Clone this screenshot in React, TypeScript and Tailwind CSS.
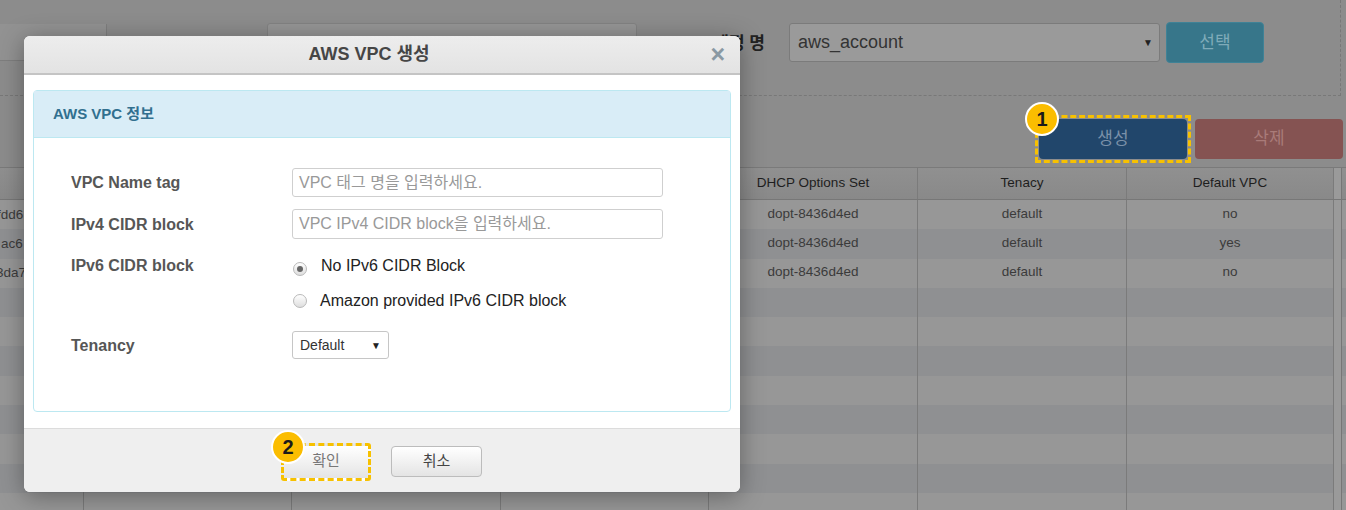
const rows = [
  { id: 'fdd6', shift: '-ml-[3px]', dhcp: 'dopt-8436d4ed', tenancy: 'default', def: 'no' },
  { id: 'ac6', shift: 'ml-[1px]', dhcp: 'dopt-8436d4ed', tenancy: 'default', def: 'yes' },
  { id: '3da7', shift: '-ml-[4px]', dhcp: 'dopt-8436d4ed', tenancy: 'default', def: 'no' },
  ...Array.from({ length: 8 }, () => ({ id: '', shift: '', dhcp: '', tenancy: '', def: '' })),
];

const cols = ['w-[84px]', 'w-[208px]', 'w-[209px]', 'w-[208px]', 'w-[209px]', 'w-[209px]', 'w-[207px]'];

function Badge({ n }: { n: string }) {
  return (
    <span className="absolute -left-[13px] -top-[16px] z-10 flex h-[34px] w-[34px] items-center justify-center rounded-full border-2 border-white bg-[#fbbd00] text-[20px] font-bold leading-none text-[#1a1a1a]">
      {n}
    </span>
  );
}

function Radio({ checked }: { checked?: boolean }) {
  return (
    <span className="flex h-[14px] w-[14px] shrink-0 items-center justify-center rounded-full border border-[#b9b9b9] bg-gradient-to-b from-white to-[#dedede]">
      {checked && <span className="h-[6px] w-[6px] rounded-full bg-[#666]" />}
    </span>
  );
}

export default function App() {
  return (
    <div className="relative h-[510px] w-[1346px] overflow-hidden bg-[#8c8c8c] font-['Liberation_Sans','Noto_Sans_CJK_KR',sans-serif]">
      {/* page behind the dialog */}
      <div className="flex h-[96px] w-[1341px] items-start border-b border-r border-dashed border-[#787878] pt-[23px]">
        <div className="mt-[1px] h-[37px] w-[107px] border-b border-r border-[#7e7e7e] bg-[#929292]" />
        <div className="ml-[160px] h-[38px] w-[370px] rounded-[3px] border border-[#828282] bg-[#959595]" />
        <div className="ml-[74px] mt-[8px] w-[54px] text-right text-[17px] font-bold text-[#222]">계정 명</div>
        <div className="ml-[24px] flex h-[39px] w-[371px] items-center justify-between rounded-[3px] border border-[#7b7b7b] bg-[#9a9a9a] pl-[8px] pr-[6px]">
          <span className="text-[18px] text-[#333]">aws_account</span>
          <span className="text-[10px] text-[#222]">▼</span>
        </div>
        <div className="ml-[6px] -mt-[1px] flex h-[41px] w-[98px] items-center justify-center rounded-[4px] border border-[#3f8296] bg-[#37768a] text-[17px] text-[#7fabb9]">
          선택
        </div>
      </div>

      <div className="flex items-center justify-end pr-[3px] pt-[19px]">
        <div className="relative border-[3px] border-dashed border-[#f7c100] p-[1px]">
          <Badge n="1" />
          <div className="flex h-[40px] w-[148px] items-center justify-center rounded-[4px] bg-[#21466b] text-[17px] text-[#7b91a9]">
            생성
          </div>
        </div>
        <div className="ml-[4px] flex h-[40px] w-[148px] items-center justify-center rounded-[4px] bg-[#855352] text-[17px] text-[#a97b79]">
          삭제
        </div>
      </div>

      <div className="mt-[4px] border-t border-[#7a7a7a]">
        <div className="flex h-[32px] border-b border-[#777] bg-gradient-to-b from-[#909090] to-[#898989] text-[13.5px] text-[#1e1e1e]">
          {['', '', '', '', 'DHCP Options Set', 'Tenacy', 'Default VPC'].map((h, i) => (
            <div key={i} className={`${cols[i]} flex items-center justify-center border-r border-[#7b7b7b]`}>
              {h}
            </div>
          ))}
          <div className="w-[8px] border-r border-[#777] bg-[#9a9a9a]" />
        </div>
        {rows.map((r, i) => (
          <div key={i} className={`flex h-[29.3px] text-[13.5px] text-[#3b3b3b] ${i % 2 === 0 ? 'bg-[#979797]' : 'bg-[#8f9092]'}`}>
            <div className={`${cols[0]} flex items-center overflow-hidden whitespace-nowrap border-r border-[#7b7b7b]`}>
              <span className={r.shift}>{r.id}</span>
            </div>
            <div className={`${cols[1]} border-r border-[#7b7b7b]`} />
            <div className={`${cols[2]} border-r border-[#7b7b7b]`} />
            <div className={`${cols[3]} border-r border-[#7b7b7b]`} />
            <div className={`${cols[4]} flex items-center justify-center border-r border-[#7b7b7b] pb-[2px]`}>{r.dhcp}</div>
            <div className={`${cols[5]} flex items-center justify-center border-r border-[#7b7b7b] pb-[2px]`}>{r.tenancy}</div>
            <div className={`${cols[6]} flex items-center justify-center border-r border-[#7b7b7b] pb-[2px]`}>{r.def}</div>
            <div className="w-[8px] border-r border-[#777] bg-[#9a9a9a]" />
          </div>
        ))}
      </div>

      {/* dialog */}
      <div className="absolute left-[24px] top-[36px] flex h-[456px] w-[716px] flex-col overflow-hidden rounded-[6px] bg-white shadow-[0_4px_24px_rgba(0,0,0,0.35)]">
        <div className="relative flex h-[39px] shrink-0 items-center justify-center border-b-2 border-[#c4c4c4] bg-gradient-to-b from-[#ededed] to-[#e3e3e3] pr-[26px]">
          <span className="text-[18px] font-bold text-[#464646]">AWS VPC 생성</span>
          <span className="absolute right-[15px] top-[6px] text-[25px] font-bold leading-none text-[#8a99a3]">×</span>
        </div>

        <div className="flex-1 px-[9px] pb-[16px] pt-[15px]">
          <div className="h-[322px] rounded-[4px] border border-[#bce8f1]">
            <div className="flex h-[47px] items-center border-b border-[#bce8f1] bg-[#d9edf7] pl-[19px] text-[15px] font-bold text-[#31708f]">
              AWS VPC 정보
            </div>
            <div className="pl-[37px] text-[16px]">
              <div className="mt-[30px] flex h-[29px] items-center">
                <div className="w-[221px] font-bold text-[#565656]">VPC Name tag</div>
                <div className="flex h-[29px] w-[371px] items-center rounded-[3px] border border-[#cfcfcf] pl-[6px] text-[#999]">
                  VPC 태그 명을 입력하세요.
                </div>
              </div>
              <div className="mt-[12px] flex h-[30px] items-center">
                <div className="w-[221px] pt-[2px] font-bold text-[#565656]">IPv4 CIDR block</div>
                <div className="flex h-[30px] w-[371px] items-center rounded-[3px] border border-[#cfcfcf] pl-[6px] text-[#999]">
                  VPC IPv4 CIDR block을 입력하세요.
                </div>
              </div>
              <div className="mt-[15px] flex items-start">
                <div className="flex h-[24px] w-[221px] items-center font-bold text-[#565656]">IPv6 CIDR block</div>
                <div className="flex flex-col gap-[11px] text-[#222]">
                  <div className="flex h-[24px] items-center pl-[1px]">
                    <span className="mt-[5px]"><Radio checked /></span>
                    <span className="ml-[14px]">No IPv6 CIDR Block</span>
                  </div>
                  <div className="flex h-[24px] items-center pl-[1px]">
                    <Radio />
                    <span className="ml-[13px]">Amazon provided IPv6 CIDR block</span>
                  </div>
                </div>
              </div>
              <div className="mt-[18px] flex h-[28px] items-center">
                <div className="w-[221px] pt-[1px] font-bold text-[#565656]">Tenancy</div>
                <div className="flex h-[28px] w-[97px] items-center justify-between rounded-[3px] border border-[#c6c6c6] bg-white pl-[7px] pr-[7px] text-[14px] text-[#333]">
                  <span>Default</span>
                  <span className="text-[10px] text-[#222]">▼</span>
                </div>
              </div>
            </div>
          </div>
        </div>

        <div className="flex h-[64px] shrink-0 items-center justify-center gap-[20px] border-t border-[#dcdcdc] bg-[#efefef] pr-[1px]">
          <div className="relative mt-[2px] flex h-[38px] w-[90px] items-center justify-center rounded-[3px] border-[3px] border-dashed border-[#f7c100] bg-gradient-to-b from-white to-[#e4e4e4] text-[15px] text-[#777]">
            <Badge n="2" />
            확인
          </div>
          <div className="mt-[2px] flex h-[31px] w-[91px] items-center justify-center rounded-[4px] border border-[#bcbcbc] bg-gradient-to-b from-white to-[#e4e4e4] text-[15px] text-[#444]">
            취소
          </div>
        </div>
      </div>
    </div>
  );
}
